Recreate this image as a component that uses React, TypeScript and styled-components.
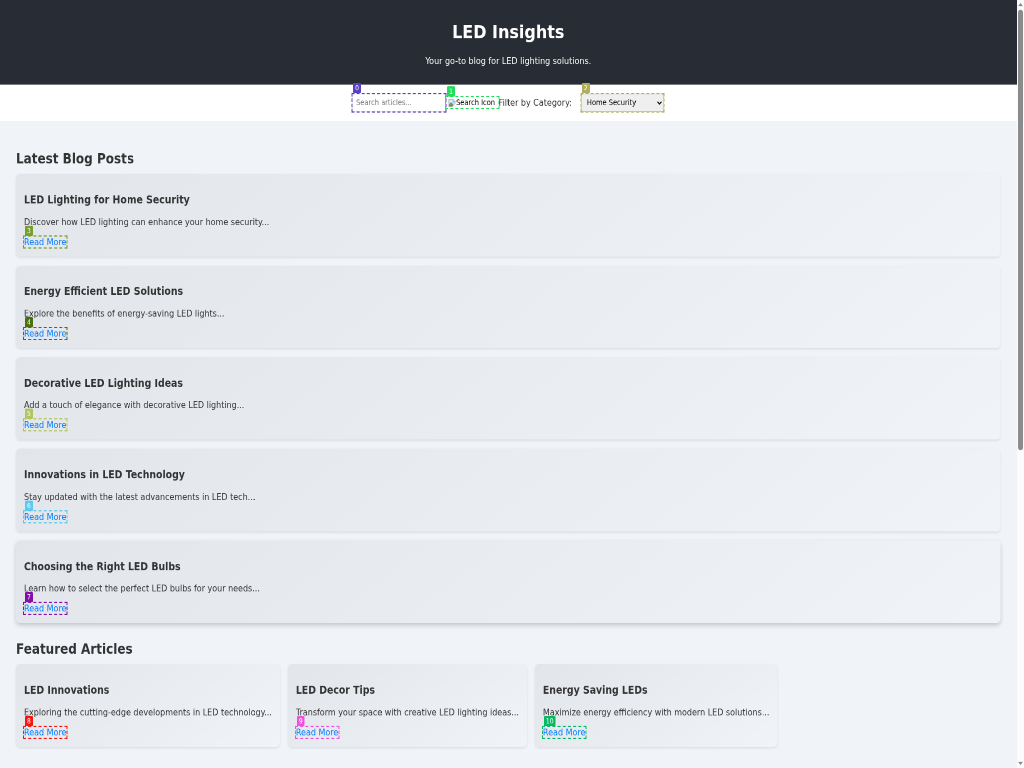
import React from "react";
import styled, { createGlobalStyle } from "styled-components";

const GlobalStyle = createGlobalStyle`
  * { box-sizing: border-box; }
  html, body { margin: 0; overflow: hidden; }
  body { font-family: "DejaVu Sans", sans-serif; font-size: 16px; color: #333; background: #f0f4f8; }
`;

const Viewport = styled.div`
  width: 1024px;
  height: 768px;
  overflow: hidden;
`;

const Screen = styled.div`
  display: flex;
  width: 2048px;
  height: 1344px;
  transform: scale(0.5, 0.571429);
  transform-origin: 0 0;
  will-change: transform;
  background: #f0f4f8;
`;

const Page = styled.div`
  flex: 1;
  min-width: 0;
  overflow: hidden;
`;

const Header = styled.header`
  padding: 16px;
  height: 148px;
  background: #282c34;
  color: #fff;
  text-align: center;
`;

const Title = styled.h1`
  margin: 21.44px 0;
  font-size: 32px;
`;

const Tagline = styled.p`
  margin: 16px 0;
`;

const FilterBar = styled.div`
  display: flex;
  justify-content: center;
  align-items: center;
  height: 64px;
  padding: 0 1px 1px 0;
  background: #fff;
`;

const Marked = styled.span<{ $color: string; $inset?: boolean }>`
  position: relative;
  display: inline-flex;
  outline: 2px dashed ${(p) => p.$color};
  outline-offset: ${(p) => (p.$inset ? "-1px" : "0")};
`;

const Tag = styled.span<{ $color: string }>`
  position: absolute;
  left: 2px;
  bottom: calc(100% + 1px);
  padding: 0 4px;
  height: 18px;
  line-height: 18px;
  border-radius: 2px;
  background: ${(p) => p.$color};
  color: #fff;
  font-size: 12px;
`;

const SearchInput = styled.input`
  width: 188px;
  height: 32px;
  padding: 8px 7px;
  border: 1px solid #ddd;
  border-radius: 4px;
  font: 13.333px "DejaVu Sans", sans-serif;
  &::placeholder { color: #757575; }
`;

const MissingImage = styled.span`
  display: flex;
  align-items: center;
  width: 105px;
  height: 19px;
  padding-left: 4px;
  font-size: 13.333px;
  color: #000;
  white-space: nowrap;
`;

const FilterLabel = styled.label`
  margin-right: 18px;
`;

const CategorySelect = styled.select`
  width: 166px;
  height: 32px;
  padding: 0 7px;
  border: 1px solid #aaa;
  border-radius: 4px;
  background: #efefef;
  color: #000;
  font: 13.333px "DejaVu Sans", sans-serif;
`;

const Main = styled.main`
  padding: 32px;
`;

const SectionTitle = styled.h2`
  margin: 19.92px 0 12.2px;
  font-size: 24px;
  line-height: 28px;
`;

const PostList = styled.div`
  display: flex;
  flex-direction: column;
  gap: 16px;
  margin-bottom: 31.8px;
`;

const FeaturedRow = styled.div`
  display: flex;
  align-items: flex-start;
  gap: 16px;
`;

const Card = styled.article<{ $raised?: boolean }>`
  padding: 16px;
  border-radius: 8px;
  background: linear-gradient(145deg, #e2e5ea, #f0f4f8);
  box-shadow: ${(p) => (p.$raised ? "0 4px 8px rgba(0,0,0,0.2)" : "0 2px 4px rgba(0,0,0,0.1)")};
`;

const CardTitle = styled.h3`
  margin: 18.72px 0;
  font-size: 18.72px;
`;

const Excerpt = styled.p`
  margin: 16px 0;
`;

const ReadMore = styled.a`
  color: #007bff;
  text-decoration: none;
`;

const Scrollbar = styled.div`
  display: flex;
  flex-direction: column;
  align-items: center;
  width: 15px;
  padding: 5px 0;
  background: #fcfcfc;
`;

const Thumb = styled.div`
  width: 10px;
  height: 771px;
  margin: 6px 0 auto;
  border-radius: 5px;
  background: #8b8b8b;
`;

const Arrow = ({ down }: { down?: boolean }) => (
  <svg width="10" height="6" viewBox="0 0 10 6">
    <path d={down ? "M0 0h10L5 6z" : "M0 6h10L5 0z"} fill="#8b8b8b" />
  </svg>
);

const IconSvg = styled.svg`
  flex-shrink: 0;
`;

const BrokenImageIcon = () => (
  <IconSvg width="16" height="16" viewBox="0 0 16 16">
    <path d="M1.5 1.5h9l4 4v4l-5 5h-8z" fill="#c3d5f5" stroke="#aaa" />
    <path d="M10.5 1.5v4h4z" fill="#fff" stroke="#aaa" />
    <path d="M4 6a2 2 0 0 1 4 0z" fill="#fff" />
    <path d="M2 14v-3l4-4 5 5-2 2z" fill="#55a63b" />
    <path d="M16 8v8H8z" fill="#fff" />
  </IconSvg>
);

type Post = { id: number; title: string; text: string; color: string };

const posts: Post[] = [
  { id: 3, title: "LED Lighting for Home Security", text: "Discover how LED lighting can enhance your home security...", color: "#789e2d" },
  { id: 4, title: "Energy Efficient LED Solutions", text: "Explore the benefits of energy-saving LED lights...", color: "#4a7009" },
  { id: 5, title: "Decorative LED Lighting Ideas", text: "Add a touch of elegance with decorative LED lighting...", color: "#b0c660" },
  { id: 6, title: "Innovations in LED Technology", text: "Stay updated with the latest advancements in LED tech...", color: "#5cc8ee" },
  { id: 7, title: "Choosing the Right LED Bulbs", text: "Learn how to select the perfect LED bulbs for your needs...", color: "#850da9" },
];

const featured: Post[] = [
  { id: 8, title: "LED Innovations", text: "Exploring the cutting-edge developments in LED technology...", color: "#f9150b" },
  { id: 9, title: "LED Decor Tips", text: "Transform your space with creative LED lighting ideas...", color: "#f052df" },
  { id: 10, title: "Energy Saving LEDs", text: "Maximize energy efficiency with modern LED solutions...", color: "#08b963" },
];

const PostCard = ({ post, raised }: { post: Post; raised?: boolean }) => (
  <Card $raised={raised}>
    <CardTitle>{post.title}</CardTitle>
    <Excerpt>{post.text}</Excerpt>
    <Marked $color={post.color}>
      <ReadMore>Read More</ReadMore>
      <Tag $color={post.color}>{post.id}</Tag>
    </Marked>
  </Card>
);

export default function App() {
  return (
    <Viewport>
      <GlobalStyle />
      <Screen>
        <Page>
          <Header>
            <Title>LED Insights</Title>
            <Tagline>Your go-to blog for LED lighting solutions.</Tagline>
          </Header>
          <FilterBar>
            <Marked $color="#5a3fc0" $inset>
              <SearchInput placeholder="Search articles..." />
              <Tag $color="#5a3fc0">0</Tag>
            </Marked>
            <Marked $color="#22dd5c">
              <MissingImage><BrokenImageIcon />Search Icon</MissingImage>
              <Tag $color="#22dd5c">1</Tag>
            </Marked>
            <FilterLabel>Filter by Category:</FilterLabel>
            <Marked $color="#b1ad5c" $inset>
              <CategorySelect defaultValue="home">
                <option value="home">Home Security</option>
              </CategorySelect>
              <Tag $color="#b1ad5c">2</Tag>
            </Marked>
          </FilterBar>
          <Main>
            <SectionTitle>Latest Blog Posts</SectionTitle>
            <PostList>
              {posts.map((p) => <PostCard key={p.id} post={p} raised={p.id === 7} />)}
            </PostList>
            <SectionTitle>Featured Articles</SectionTitle>
            <FeaturedRow>
              {featured.map((p) => <PostCard key={p.id} post={p} />)}
            </FeaturedRow>
          </Main>
        </Page>
        <Scrollbar>
          <Arrow />
          <Thumb />
          <Arrow down />
        </Scrollbar>
      </Screen>
    </Viewport>
  );
}
